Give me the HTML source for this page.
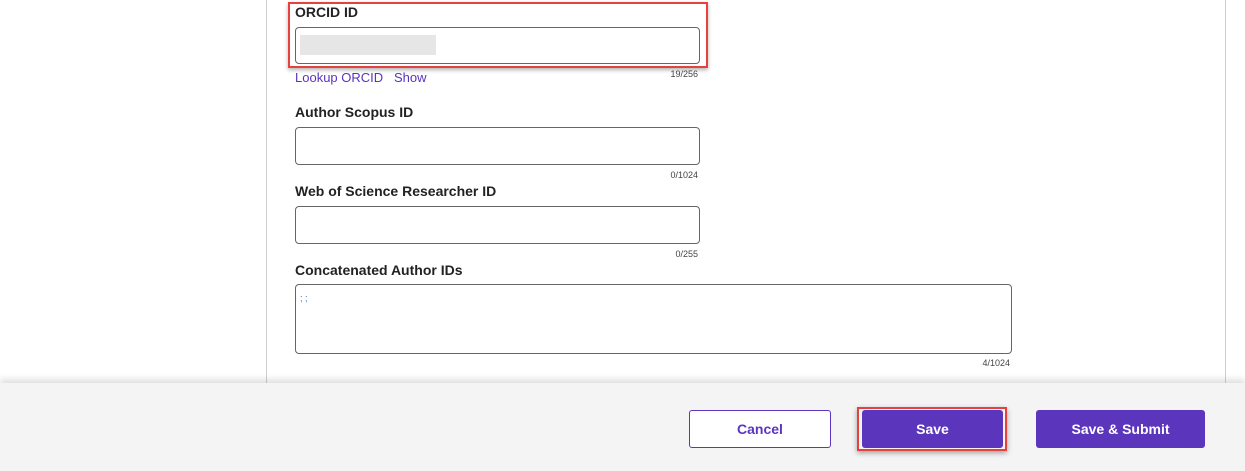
<!DOCTYPE html>
<html><head><style>
body{margin:0;width:1245px;height:471px;position:relative;overflow:hidden;background:#fff;font-family:"Liberation Sans",Arial,sans-serif}
.a{position:absolute}
.lbl{font-size:14px;font-weight:bold;color:#222}
.inp{border:1px solid #666;border-radius:4px;background:#fff;box-sizing:border-box}
.cnt{font-size:9px;color:#444;text-align:right}
.btn{position:absolute;top:410px;height:38px;box-sizing:border-box;border-radius:3px;font-size:14px;font-weight:bold;display:flex;align-items:center;justify-content:center}
</style></head><body>
<div class="a" style="left:266px;top:0;width:1px;height:383px;background:#d0d0d0"></div>
<div class="a" style="left:1225px;top:0;width:1px;height:383px;background:#d0d0d0"></div>

<div class="a lbl" style="left:295px;top:4px">ORCID ID</div>
<div class="a inp" style="left:295px;top:27px;width:405px;height:37px"></div>
<div class="a" style="left:300px;top:35px;width:136px;height:20px;background:#e6e6e6"></div>
<div class="a" style="left:288px;top:2px;width:420px;height:66px;border:2px solid #e8403e;box-sizing:border-box;box-shadow:0 2px 4px rgba(0,0,0,.3)"></div>
<div class="a" style="left:295px;top:70px;font-size:13px;color:#5a33c0">Lookup ORCID&nbsp;&nbsp;&nbsp;Show</div>
<div class="a cnt" style="left:600px;width:98px;top:69px">19/256</div>

<div class="a lbl" style="left:295px;top:104px">Author Scopus ID</div>
<div class="a inp" style="left:295px;top:127px;width:405px;height:38px"></div>
<div class="a cnt" style="left:600px;width:98px;top:170px">0/1024</div>

<div class="a lbl" style="left:295px;top:183px">Web of Science Researcher ID</div>
<div class="a inp" style="left:295px;top:206px;width:405px;height:38px"></div>
<div class="a cnt" style="left:600px;width:98px;top:249px">0/255</div>

<div class="a lbl" style="left:295px;top:262px">Concatenated Author IDs</div>
<div class="a inp" style="left:295px;top:284px;width:717px;height:70px"></div>
<div class="a" style="left:300px;top:293px;font-size:9px;color:#4466cc">; ;</div>
<div class="a cnt" style="left:912px;width:98px;top:358px">4/1024</div>

<div class="a" style="left:0;top:383px;width:1245px;height:88px;background:#f4f4f4;box-shadow:0 -4px 6px rgba(0,0,0,.12)"></div>
<div class="btn" style="left:689px;width:142px;border:1px solid #5c35c0;background:#fff;color:#5c35c0">Cancel</div>
<div class="a" style="left:857px;top:407px;width:150px;height:44px;border:2px solid #e8403e;box-sizing:border-box;box-shadow:0 2px 5px rgba(0,0,0,.35)"></div>
<div class="btn" style="left:862px;width:141px;background:#5c35bd;color:#fff">Save</div>
<div class="btn" style="left:1036px;width:169px;background:#5c35bd;color:#fff">Save &amp; Submit</div>
</body></html>
